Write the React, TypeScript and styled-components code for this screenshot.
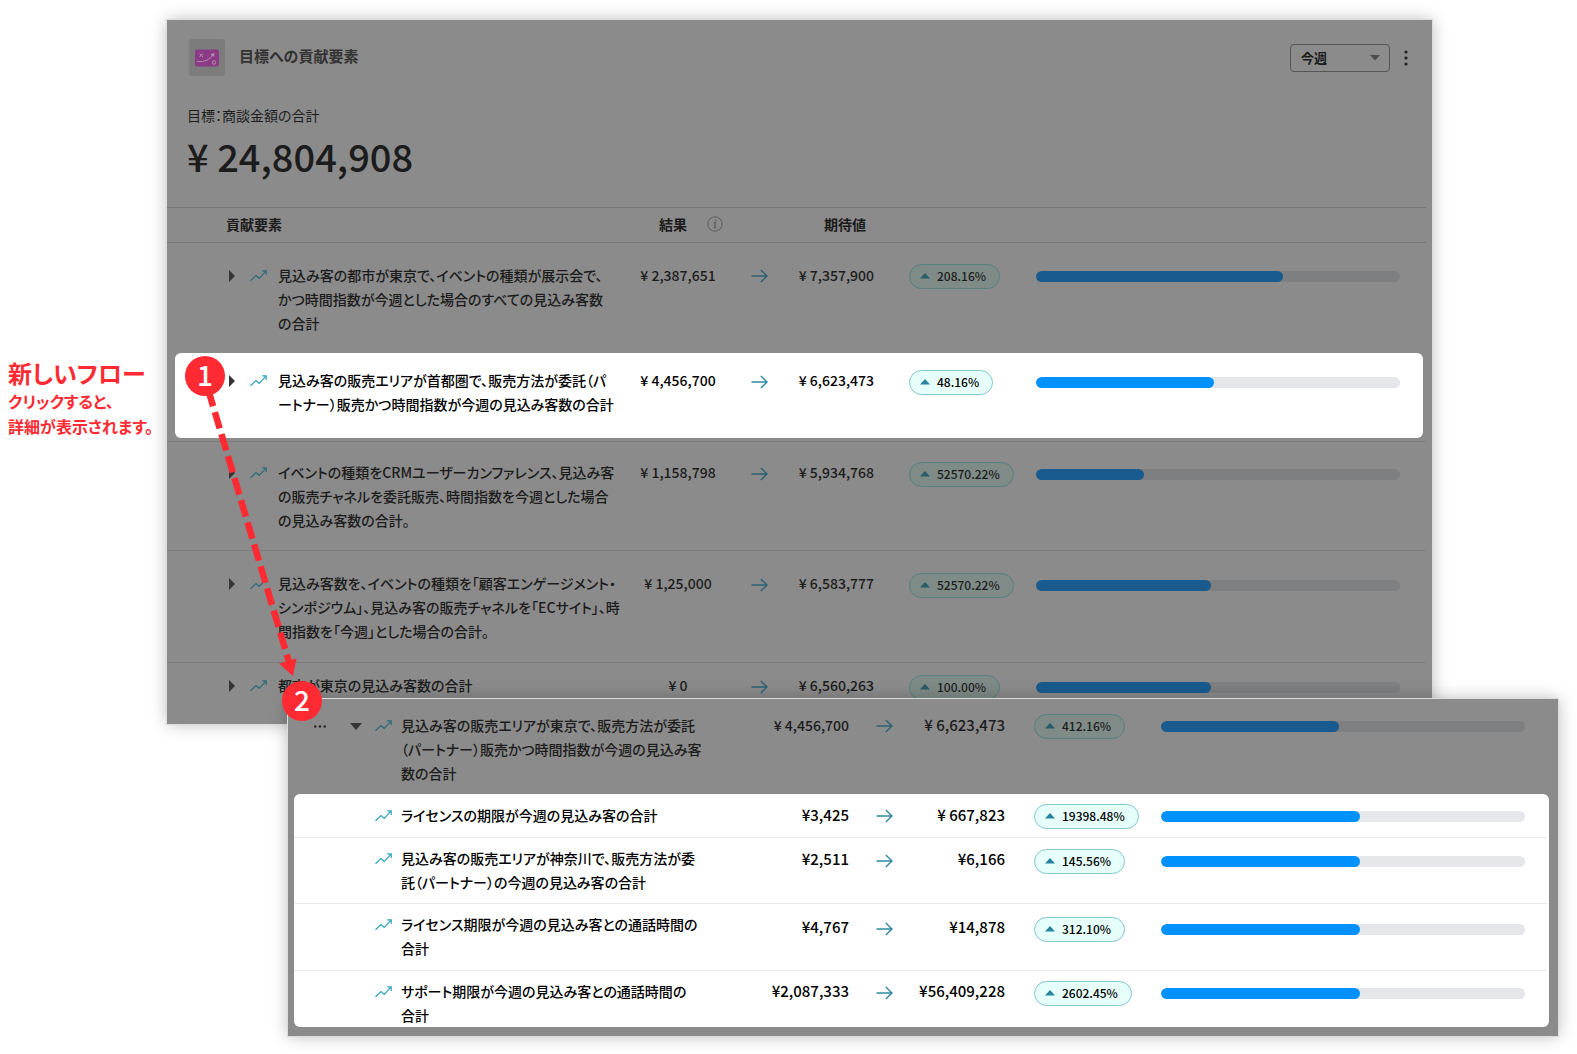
import React from "react";
import styled, { createGlobalStyle, css } from "styled-components";

const GlobalStyle = createGlobalStyle`
  *, *::before, *::after { box-sizing: border-box; }
  body {
    margin: 0;
    background: #ffffff;
    font-family: "Noto Sans CJK JP", "Noto Sans", sans-serif;
    font-feature-settings: "palt";
    font-size: 14px;
    line-height: 24px;
    color: #1c1c1c;
  }
  button, select { font: inherit; font-feature-settings: inherit; color: inherit; }
`;

const RED = "#ff2a32";

const Page = styled.main`
  position: relative;
  padding: 20px 19px 18px 0;
`;

const Stage = styled.div`
  display: flex;
  align-items: flex-start;
  margin-right: 126px;
`;

const Note = styled.aside`
  flex: 0 0 167px;
  padding: 336px 0 0 8px;
  color: ${RED};
  font-weight: 700;
  white-space: nowrap;
`;

const NoteTitle = styled.h2`
  margin: 0;
  font-size: 24px;
  line-height: 33px;
`;

const NoteText = styled.p`
  margin: 0;
  font-size: 16px;
  line-height: 25px;
`;

const Panel = styled.section`
  flex: 1;
  min-width: 0;
  background: #8b8b8b;
  box-shadow: 0 0 0 1px #dcdcdc, 0 0 16px rgba(0, 0, 0, 0.28);
`;

const DetailPanel = styled(Panel)`
  position: relative;
  margin: -25px 0 0 288px;
  padding-bottom: 9px;
`;

const PanelHead = styled.header`
  display: flex;
  align-items: center;
  padding: 19px 18px 0 22px;
`;

const IconTile = styled.span`
  display: grid;
  place-items: center;
  width: 36px;
  height: 37px;
  border-radius: 3px;
  background: #7c7c7c;
`;

const Title = styled.h1`
  flex: 1;
  margin: 0 0 0 14px;
  padding-bottom: 3px;
  font-size: 15px;
  line-height: 24px;
  font-weight: 700;
  color: #333333;
`;

const SelectBox = styled.label`
  position: relative;
  display: block;
  svg {
    position: absolute;
    right: 10px;
    top: 11px;
    pointer-events: none;
  }
`;

const PeriodSelect = styled.select`
  appearance: none;
  display: block;
  width: 100px;
  height: 28px;
  padding: 0 24px 0 10px;
  border: 1px solid #555555;
  border-radius: 4px;
  background: transparent;
  font-size: 13px;
  font-weight: 700;
  line-height: 24px;
`;

const IconButton = styled.button`
  display: grid;
  align-items: center;
  justify-items: start;
  min-width: 12px;
  height: 24px;
  padding: 0;
  border: 0;
  background: none;
`;

const MenuButton = styled(IconButton)`
  justify-items: center;
  margin-left: 8px;
  width: 16px;
`;

const Goal = styled.div`
  padding: 27px 0 0 20px;
`;

const GoalLabel = styled.p`
  margin: 0;
`;

const GoalValue = styled.p`
  margin: 0;
  padding: 1px 0 23px;
  font-size: 38px;
  line-height: 56px;
  font-weight: 500;
`;

const Table = styled.table`
  display: block;
  thead, tbody { display: block; }
  th, td { padding: 0; text-align: left; }
`;

const mainColumns = css`
  grid-template-columns: 22px 28px 350px 100px 63px 83px 162px minmax(80px, 1fr);
`;

const HeadRow = styled.tr`
  display: grid;
  ${mainColumns}
  align-items: center;
  height: 36px;
  margin-right: 6px;
  padding: 0 25px 2px 59px;
  border: solid #767676;
  border-width: 1px 0;
  th:nth-child(1) { grid-column: 1 / 4; }
  th:nth-child(2) { grid-column: 4 / 6; padding-left: 33px; }
  th:nth-child(3) { grid-column: 6; padding-left: 35px; white-space: nowrap; }
`;

const ResultHead = styled.span`
  display: flex;
  align-items: center;
  gap: 20px;
`;

const Row = styled.tr<{ $top: number; $bottom: number; $lit?: boolean; $line?: boolean }>`
  display: grid;
  ${mainColumns}
  align-items: start;
  margin-right: 6px;
  padding: ${(p) => p.$top}px 26px ${(p) => p.$bottom}px 61px;
  border-top: ${(p) => (p.$line ? "1px solid #7d7d7d" : "0")};
  ${(p) =>
    p.$lit &&
    css`
      margin: 0 9px 3px 8px;
      padding-left: 53px;
      padding-right: 23px;
      border-radius: 6px;
      background: #ffffff;
      color: #000000;
    `}
`;

const DetailRow = styled(Row)<{ $child?: boolean }>`
  grid-template-columns: 36px 25px 26px 348px 100px 69px 87px 156px minmax(80px, 1fr);
  margin-right: ${(p) => (p.$child ? 2 : 11)}px;
  padding-left: ${(p) => (p.$child ? 20 : 26)}px;
  padding-right: 22px;
  border-top-color: #e8e8e8;
`;

const LitGroup = styled.tbody`
  margin: 0 9px 0 6px;
  border-radius: 6px;
  background: #ffffff;
  color: #000000;
`;

const IconCell = styled.td`
  display: flex;
  align-items: center;
  height: 26px;
`;

const NameCell = styled.td`
  font-weight: 500;
  white-space: pre;
`;

const Amount = styled.td<{ $align: "center" | "right"; $large?: boolean; $drop?: number }>`
  && {
    padding-top: ${(p) => Math.max(0, p.$drop ?? 0)}px;
    text-align: ${(p) => p.$align};
  }
  font-size: ${(p) => (p.$large ? 15 : 14)}px;
  font-weight: 500;
  white-space: nowrap;
`;

const MetricCell = styled.td<{ $drop?: number; $indent?: number }>`
  display: flex;
  align-items: center;
  height: ${(p) => 28 + 2 * (p.$drop ?? 0)}px;
  && { padding-left: ${(p) => p.$indent ?? 0}px; }
`;

const ArrowCell = styled(MetricCell)`
  justify-content: center;
`;

const Badge = styled.span<{ $lit?: boolean }>`
  display: inline-flex;
  align-items: center;
  gap: 7px;
  height: 25px;
  padding: 0 13px 0 10px;
  border: 1px solid ${(p) => (p.$lit ? "#83c9cb" : "#567f80")};
  border-radius: 13px;
  background: ${(p) => (p.$lit ? "#e6fffa" : "#7f8b87")};
  font-size: 12px;
  line-height: 16px;
  font-weight: 500;
`;

const Track = styled.div<{ $lit?: boolean }>`
  flex: 1;
  height: 11px;
  border-radius: 6px;
  overflow: hidden;
  background: ${(p) => (p.$lit ? "#e6e7eb" : "#7e7f81")};
`;

const Fill = styled.div<{ $lit?: boolean }>`
  height: 100%;
  border-radius: 6px;
  background: ${(p) => (p.$lit ? "#0091ff" : "#195b8e")};
`;

const FlowLine = styled.svg`
  position: absolute;
  left: 185px;
  top: 356px;
  pointer-events: none;
`;

const Step = styled.span<{ $x: number; $y: number }>`
  position: absolute;
  left: ${(p) => p.$x}px;
  top: ${(p) => p.$y}px;
  width: 40px;
  height: 40px;
  border-radius: 50%;
  background: ${RED};
  color: #ffffff;
  font-size: 28px;
  line-height: 36px;
  font-weight: 500;
  text-align: center;
`;

const Caret = ({ open }: { open?: boolean }) =>
  open ? (
    <svg width="12" height="7" viewBox="0 0 12 7"><path d="M0 0h12L6 7z" fill="#353535" /></svg>
  ) : (
    <svg width="8" height="12" viewBox="0 0 8 12"><path d="M1 0v12L7 6z" fill="#353535" /></svg>
  );

const Trend = ({ lit }: { lit?: boolean }) => (
  <svg width="17" height="12" viewBox="0 0 17 12" fill="none" stroke={lit ? "#2fa3ba" : "#2a6c79"} strokeWidth="1.2">
    <path d="M.5 10.800 6 5.500l3.200 2.800L16 1.200M12.200.9h4v4" />
  </svg>
);

const Arrow = ({ lit }: { lit?: boolean }) => (
  <svg width="17" height="14" viewBox="0 0 17 14" fill="none" stroke={lit ? "#2d8ca3" : "#2c6373"} strokeWidth="1.4">
    <path d="M.5 7h15.300M9.800.9 16 7l-6.200 6.100" />
  </svg>
);

const Up = ({ lit }: { lit?: boolean }) => (
  <svg width="10" height="6" viewBox="0 0 10 6"><path d="M5 0l5 5.500H0z" fill={lit ? "#2684a0" : "#275c69"} /></svg>
);

type Item = {
  name: string;
  result: string;
  expected: string;
  rate: string;
  share: number;
  top: number;
  bottom: number;
  drop?: number;
  lit?: boolean;
};

const factors: Item[] = [
  { name: "見込み客の都市が東京で、イベントの種類が展示会で、\nかつ時間指数が今週とした場合のすべての見込み客数\nの合計", result: "¥ 2,387,651", expected: "¥ 7,357,900", rate: "208.16%", share: 67.8, top: 20, bottom: 18, drop: -1 },
  { name: "見込み客の販売エリアが首都圏で、販売方法が委託（パ\nートナー）販売かつ時間指数が今週の見込み客数の合計", result: "¥ 4,456,700", expected: "¥ 6,623,473", rate: "48.16%", share: 48.9, top: 15, bottom: 22, lit: true },
  { name: "イベントの種類をCRMユーザーカンファレンス、見込み客\nの販売チャネルを委託販売、時間指数を今週とした場合\nの見込み客数の合計。", result: "¥ 1,158,798", expected: "¥ 5,934,768", rate: "52570.22%", share: 29.6, top: 18, bottom: 18 },
  { name: "見込み客数を、イベントの種類を「顧客エンゲージメント・\nシンポジウム」、見込み客の販売チャネルを「ECサイト」、時\n間指数を「今週」とした場合の合計。", result: "¥ 1,25,000", expected: "¥ 6,583,777", rate: "52570.22%", share: 48, top: 20, bottom: 19 },
  { name: "都市が東京の見込み客数の合計", result: "¥ 0", expected: "¥ 6,560,263", rate: "100.00%", share: 48, top: 10, bottom: 23 },
];

const parent: Item = {
  name: "見込み客の販売エリアが東京で、販売方法が委託\n（パートナー）販売かつ時間指数が今週の見込み客\n数の合計",
  result: "¥ 4,456,700", expected: "¥ 6,623,473", rate: "412.16%", share: 48.9, top: 14, bottom: 9, drop: -1,
};

const children: Item[] = [
  { name: "ライセンスの期限が今週の見込み客の合計", result: "¥3,425", expected: "¥ 667,823", rate: "19398.48%", share: 54.6, top: 9, bottom: 8, drop: -1 },
  { name: "見込み客の販売エリアが神奈川で、販売方法が委\n託（パートナー）の今週の見込み客の合計", result: "¥2,511", expected: "¥6,166", rate: "145.56%", share: 54.6, top: 8, bottom: 9, drop: 1 },
  { name: "ライセンス期限が今週の見込み客との通話時間の\n合計", result: "¥4,767", expected: "¥14,878", rate: "312.10%", share: 54.6, top: 8, bottom: 10, drop: 3 },
  { name: "サポート期限が今週の見込み客との通話時間の\n合計", result: "¥2,087,333", expected: "¥56,409,228", rate: "2602.45%", share: 54.6, top: 8, bottom: 0 },
];

const Growth = ({ item, lit, indent }: { item: Item; lit?: boolean; indent: number }) => (
  <>
    <MetricCell $drop={item.drop} $indent={indent}>
      <Badge $lit={lit}><Up lit={lit} />{item.rate}</Badge>
    </MetricCell>
    <MetricCell $drop={item.drop}>
      <Track $lit={lit}><Fill $lit={lit} style={{ width: `${item.share}%` }} /></Track>
    </MetricCell>
  </>
);

const DetailCells = ({ item, lit }: { item: Item; lit?: boolean }) => (
  <>
    <IconCell>{!lit && <IconButton aria-label="その他"><svg width="12" height="3" viewBox="0 0 12 3" fill="#222222"><circle cx="1.300" cy="1.500" r="1.200" /><circle cx="6" cy="1.500" r="1.200" /><circle cx="10.700" cy="1.500" r="1.200" /></svg></IconButton>}</IconCell>
    <IconCell>{!lit && <IconButton aria-label="閉じる" aria-expanded="true"><Caret open /></IconButton>}</IconCell>
    <IconCell><Trend lit={lit} /></IconCell>
    <NameCell>{item.name}</NameCell>
    <Amount $align="right" $large={lit} $drop={item.drop}>{item.result}</Amount>
    <ArrowCell $drop={item.drop} $indent={2}><Arrow lit={lit} /></ArrowCell>
    <Amount $align="right" $large $drop={item.drop}>{item.expected}</Amount>
    <Growth item={item} lit={lit} indent={29} />
  </>
);

export default function App() {
  return (
    <>
      <GlobalStyle />
      <Page>
        <Stage>
          <Note>
            <NoteTitle>新しいフロー</NoteTitle>
            <NoteText>クリックすると、<br />詳細が表示されます。</NoteText>
          </Note>
          <Panel>
            <PanelHead>
              <IconTile>
                <svg width="24" height="18" viewBox="0 0 24 18" fill="none" stroke="#b58fb2">
                  <rect width="24" height="17" y=".5" rx="2" fill="#8b3b85" stroke="none" />
                  <path d="M4.500 4.500l3.500 3.500M8 4.500 4.500 8M2 12.500c8 1 13-2.500 16.500-7" />
                  <path d="M19 4.500l-3 1.200 2.500 1.600z" fill="#b58fb2" />
                  <circle cx="19" cy="13.500" r="1.700" />
                </svg>
              </IconTile>
              <Title>目標への貢献要素</Title>
              <SelectBox>
                <PeriodSelect aria-label="期間" defaultValue="week">
                  <option value="week">今週</option>
                </PeriodSelect>
                <svg width="10" height="6" viewBox="0 0 10 6"><path d="M0 0h10L5 5.500z" fill="#4c4c4c" /></svg>
              </SelectBox>
              <MenuButton aria-label="メニュー">
                <svg width="4" height="16" viewBox="0 0 4 16" fill="#222222"><circle cx="2" cy="2" r="1.600" /><circle cx="2" cy="8" r="1.600" /><circle cx="2" cy="14" r="1.600" /></svg>
              </MenuButton>
            </PanelHead>
            <Goal>
              <GoalLabel>目標：商談金額の合計</GoalLabel>
              <GoalValue>¥ 24,804,908</GoalValue>
            </Goal>
            <Table>
              <thead>
                <HeadRow>
                  <th>貢献要素</th>
                  <th>
                    <ResultHead>
                      結果
                      <svg width="16" height="16" viewBox="0 0 16 16" fill="none" stroke="#5f5f5f">
                        <circle cx="8" cy="8" r="7.200" />
                        <path d="M6.500 6.700h2L7.500 11.500h1.700" strokeWidth="1.300" />
                        <circle cx="8.700" cy="4.300" r=".5" />
                      </svg>
                    </ResultHead>
                  </th>
                  <th>期待値</th>
                </HeadRow>
              </thead>
              <tbody>
                {factors.map((f, i) => (
                  <Row key={f.name} $top={f.top} $bottom={f.bottom} $lit={f.lit} $line={i > 1}>
                    <IconCell><IconButton aria-label="開く" aria-expanded="false"><Caret /></IconButton></IconCell>
                    <IconCell><Trend lit={f.lit} /></IconCell>
                    <NameCell>{f.name}</NameCell>
                    <Amount $align="center">{f.result}</Amount>
                    <ArrowCell $drop={f.drop}><Arrow lit={f.lit} /></ArrowCell>
                    <Amount $align="right">{f.expected}</Amount>
                    <Growth item={f} lit={f.lit} indent={35} />
                  </Row>
                ))}
              </tbody>
            </Table>
          </Panel>
        </Stage>
        <DetailPanel>
          <Table>
            <tbody>
              <DetailRow $top={parent.top} $bottom={parent.bottom}>
                <DetailCells item={parent} />
              </DetailRow>
            </tbody>
            <LitGroup>
              {children.map((c, i) => (
                <DetailRow key={c.name} $child $top={c.top} $bottom={c.bottom} $line={i > 0}>
                  <DetailCells item={c} lit />
                </DetailRow>
              ))}
            </LitGroup>
          </Table>
        </DetailPanel>
        <FlowLine width="130" height="330" viewBox="185 356 130 330" fill={RED}>
          <path d="M208.300 390 289 662" stroke={RED} strokeWidth="6.500" strokeDasharray="17 6" />
          <path d="M279 663.500l17.500-5L293 676z" />
        </FlowLine>
        <Step $x={185} $y={356}>1</Step>
        <Step $x={282} $y={681}>2</Step>
      </Page>
    </>
  );
}
